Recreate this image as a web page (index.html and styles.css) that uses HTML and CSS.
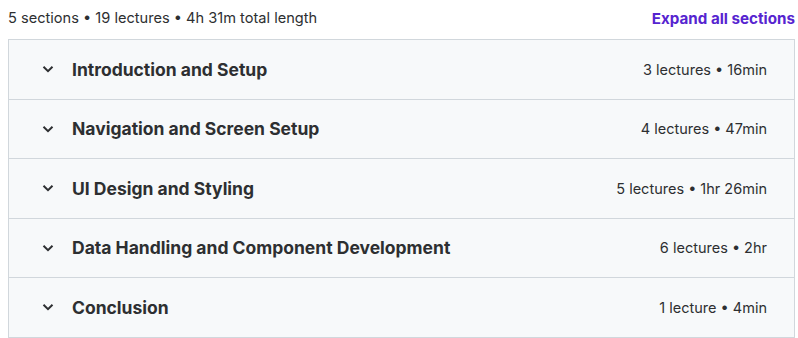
FILE: index.html
```html
<!DOCTYPE html>
<html>

    <head>
        <title>Course content</title>
        <meta name="viewport" content="width=device-width, initial-scale=1.0">
        <link rel="stylesheet" href="styles.css">
    </head>

    <body>
        <div class="curriculum">
            <div class="summary">
                <span>5 sections • 19 lectures • 4h 31m total length</span>
                <button class="expand-all">Expand all sections</button>
            </div>

            <div class="sections">
                <div class="section">
                    <svg class="chevron" viewBox="0 0 12 8"><path d="M1.5 1.8 6 6.2l4.5-4.4"/></svg>
                    <span class="title">Introduction and Setup</span>
                    <span class="meta">3 lectures • 16min</span>
                </div>
                <div class="section">
                    <svg class="chevron" viewBox="0 0 12 8"><path d="M1.5 1.8 6 6.2l4.5-4.4"/></svg>
                    <span class="title">Navigation and Screen Setup</span>
                    <span class="meta">4 lectures • 47min</span>
                </div>
                <div class="section">
                    <svg class="chevron" viewBox="0 0 12 8"><path d="M1.5 1.8 6 6.2l4.5-4.4"/></svg>
                    <span class="title">UI Design and Styling</span>
                    <span class="meta">5 lectures • 1hr 26min</span>
                </div>
                <div class="section">
                    <svg class="chevron" viewBox="0 0 12 8"><path d="M1.5 1.8 6 6.2l4.5-4.4"/></svg>
                    <span class="title">Data Handling and Component Development</span>
                    <span class="meta">6 lectures • 2hr</span>
                </div>
                <div class="section">
                    <svg class="chevron" viewBox="0 0 12 8"><path d="M1.5 1.8 6 6.2l4.5-4.4"/></svg>
                    <span class="title">Conclusion</span>
                    <span class="meta">1 lecture • 4min</span>
                </div>
            </div>
        </div>
    </body>

</html>
```

FILE: styles.css
```css
body {
    font-family: Inter, "Noto Sans", sans-serif;
    color: #2d2f31;
    margin: 0;
    background: #fff;
}

.curriculum {
    margin: 0 3px 0 8px;
}

.summary {
    display: flex;
    justify-content: space-between;
    align-items: center;
    height: 36px;
    padding-bottom: 3px;
    font-size: 14.6px;
}

.expand-all {
    border: none;
    background: none;
    padding: 0;
    font-family: inherit;
    font-size: 15.2px;
    font-weight: 700;
    color: #5624d0;
    cursor: pointer;
}

.sections {
    border: 1px solid #d1d7dc;
    border-bottom: none;
}

.section {
    display: flex;
    align-items: center;
    height: 58.5px;
    padding: 0 27px 0 33px;
    background: #f7f9fa;
    border-bottom: 1px solid #d1d7dc;
}

.chevron {
    width: 12px;
    height: 8px;
    margin-right: 18px;
    fill: none;
    stroke: #2d2f31;
    stroke-width: 2;
}

.title {
    flex: 1;
    font-size: 17.5px;
    font-weight: 700;
}

.meta {
    font-size: 14.5px;
}
```
